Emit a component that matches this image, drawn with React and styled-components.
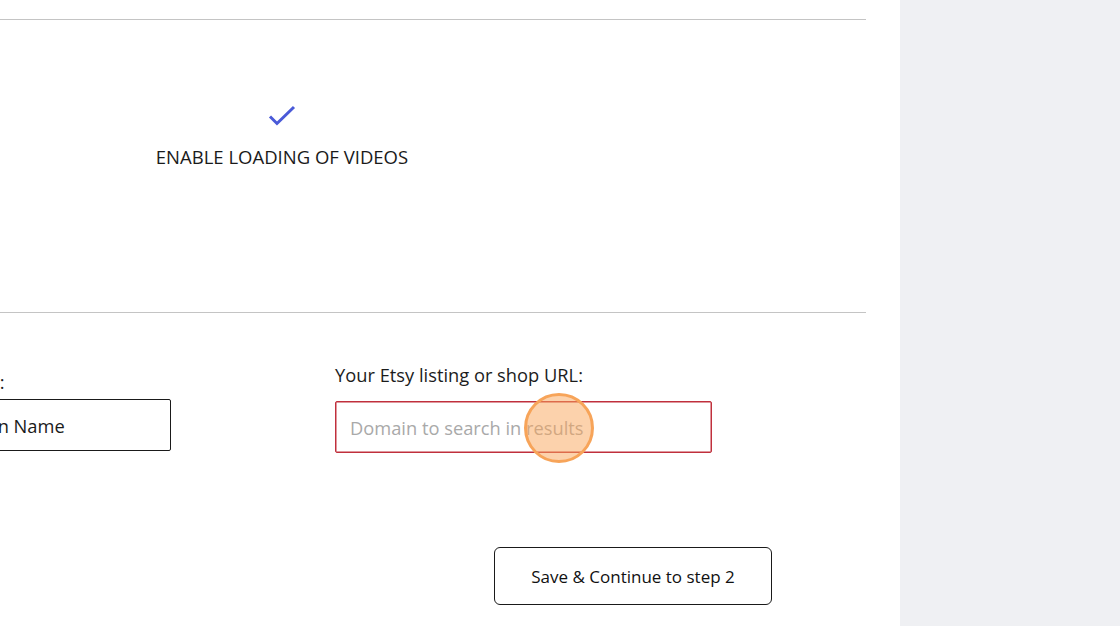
import React from 'react';
import styled, { createGlobalStyle } from 'styled-components';

const GlobalStyle = createGlobalStyle`
  html, body {
    margin: 0;
    padding: 0;
    background: #ffffff;
    font-family: "Open Sans", Lato, sans-serif;
    color: #1c1c1c;
  }
`;

const Page = styled.div`
  display: flex;
  width: 1120px;
  height: 626px;
  overflow: hidden;
`;

const Main = styled.div`
  width: 900px;
  padding-right: 34px;
  box-sizing: border-box;
  overflow: hidden;
  background: #fff;
`;

const Sidebar = styled.div`
  flex: 1;
  background: #eff0f3;
`;

const Divider = styled.hr`
  border: none;
  border-top: 1px solid #c4c4c4;
  margin: ${p => p.$top || 0}px 0 0;
`;

const OptionsRow = styled.div`
  display: flex;
  height: 292px;
`;

const Option = styled.div`
  width: 564px;
  display: flex;
  flex-direction: column;
  align-items: center;
  padding-top: 84px;
  box-sizing: border-box;
`;

const OptionLabel = styled.div`
  margin-top: 17px;
  font-size: 18.5px;
  line-height: 24px;
  color: #1a1a1a;
`;

const FormRow = styled.div`
  display: flex;
  gap: 164px;
  margin-left: -184px;
  margin-top: 50px;
`;

const Field = styled.div`
  width: ${p => p.$width}px;
  display: flex;
  flex-direction: column;
  padding-top: ${p => p.$offset || 0}px;
`;

const Label = styled.label`
  font-size: 18.3px;
  line-height: 23px;
  white-space: nowrap;
  color: #1c1c1c;
  margin-bottom: ${p => p.$gap}px;
`;

const Input = styled.input`
  height: 52px;
  box-sizing: border-box;
  border: 1px solid #1a1a1a;
  border-radius: 2px;
  padding: 0 14px;
  font-family: "Open Sans", Lato, sans-serif;
  font-size: 18.3px;
  color: #1a1a1a;
  outline: none;
  background: #fff;

  &::placeholder {
    color: #a9a9a9;
  }
`;

const ErrorInput = styled(Input)`
  && {
    border: 1px solid #c0303c;
    box-shadow: inset 0 0 0 0.5px #c0303c;
  }
`;

const InputWrap = styled.div`
  position: relative;
  display: flex;
  flex-direction: column;
`;

const ClickMark = styled.div`
  position: absolute;
  left: 189px;
  top: -8px;
  width: 70px;
  height: 70px;
  box-sizing: border-box;
  border-radius: 50%;
  border: 3px solid #f7a459;
  background: rgba(250, 165, 90, 0.5);
  pointer-events: none;
`;

const ButtonRow = styled.div`
  display: flex;
  padding-left: 494px;
  margin-top: 94px;
`;

const Button = styled.button`
  width: 278px;
  height: 58px;
  background: #fff;
  border: 1px solid #1a1a1a;
  border-radius: 6px;
  font-family: "Open Sans", Lato, sans-serif;
  font-size: 17px;
  color: #111;
  cursor: pointer;
`;

function CheckIcon() {
  return (
    <svg width="32" height="24" viewBox="0 0 32 24" fill="none">
      <path d="M4 12.5 L11 19.5 L28 3" stroke="#4a5ad8" strokeWidth="3" />
    </svg>
  );
}

export default function App() {
  return (
    <Page>
      <GlobalStyle />
      <Main>
        <Divider $top={19} />
        <OptionsRow>
          <Option>
            <CheckIcon />
            <OptionLabel>ENABLE LOADING OF VIDEOS</OptionLabel>
          </Option>
        </OptionsRow>
        <Divider />
        <FormRow>
          <Field $width={355} $offset={7}>
            <Label $gap={6}>The Etsy shop's name:</Label>
            <Input defaultValue="Etsy Shop or Domain Name" />
          </Field>
          <Field $width={377}>
            <Label $gap={15}>Your Etsy listing or shop URL:</Label>
            <InputWrap>
              <ErrorInput placeholder="Domain to search in results" />
              <ClickMark />
            </InputWrap>
          </Field>
        </FormRow>
        <ButtonRow>
          <Button>Save &amp; Continue to step 2</Button>
        </ButtonRow>
      </Main>
      <Sidebar />
    </Page>
  );
}
